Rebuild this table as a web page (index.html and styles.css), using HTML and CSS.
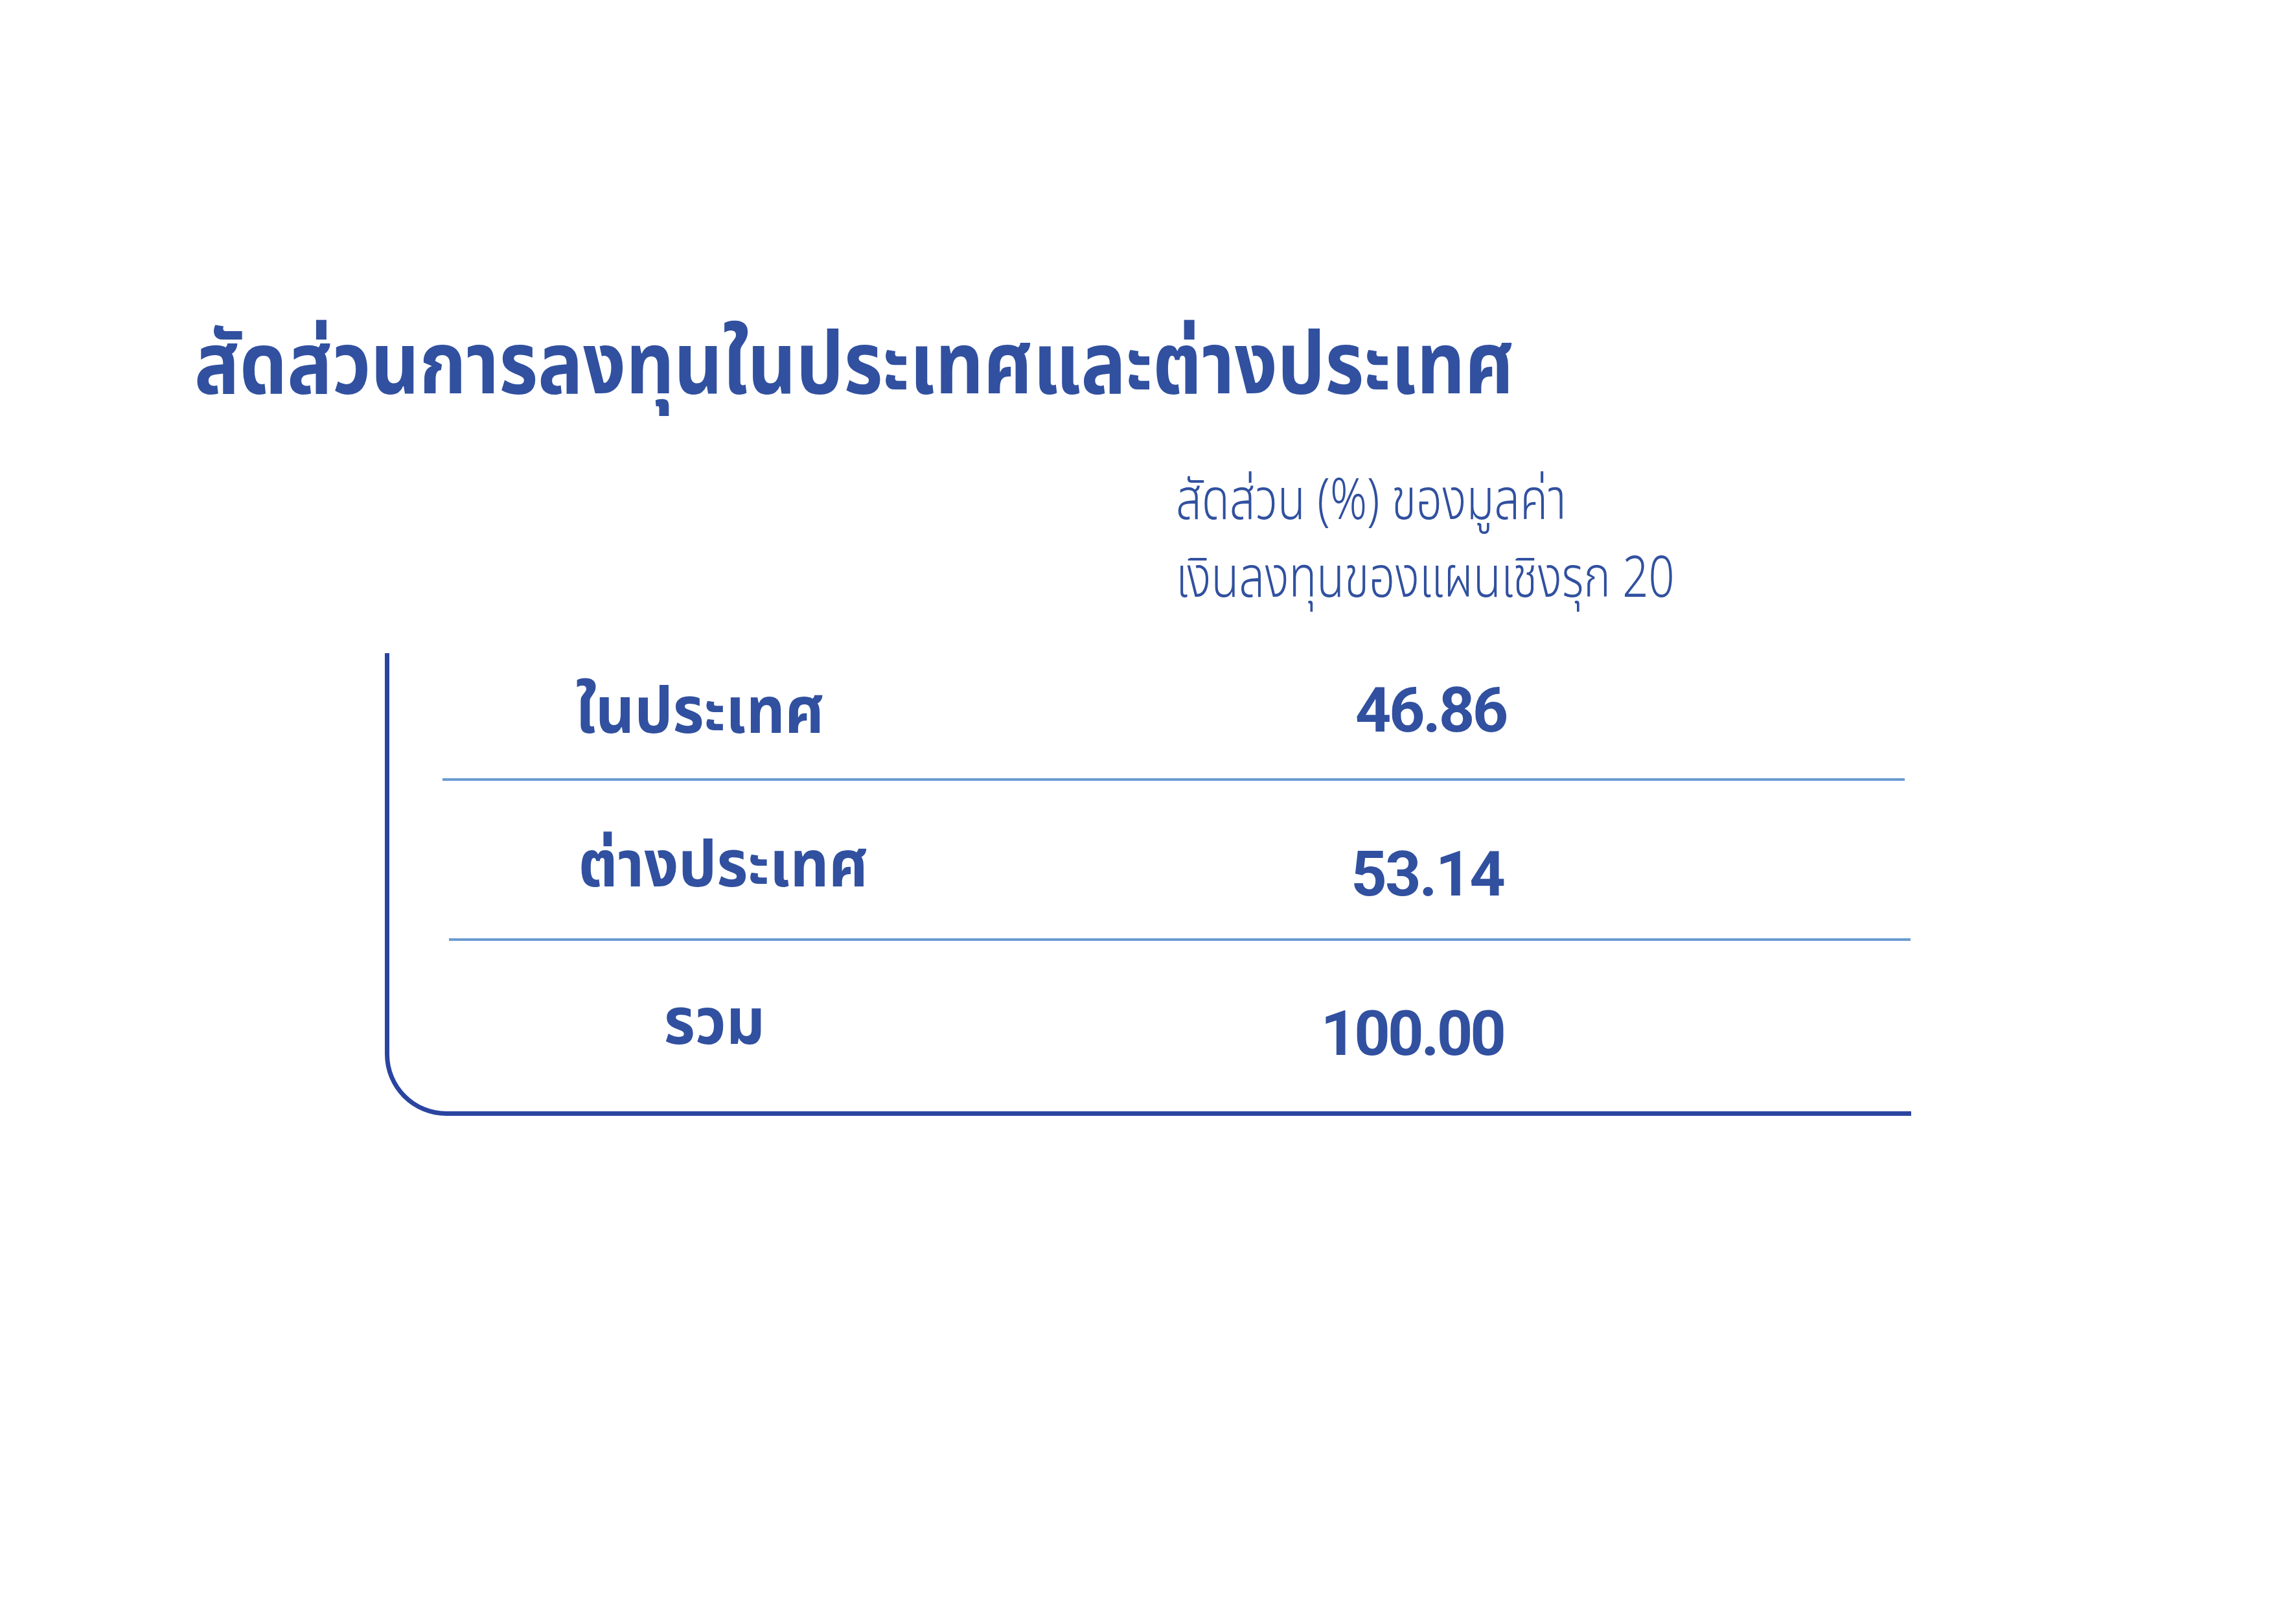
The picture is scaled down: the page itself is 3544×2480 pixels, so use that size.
FILE: index.html
```html
<!DOCTYPE html>
<html lang="th">
<head>
<meta charset="utf-8">
<title>สัดส่วนการลงทุนในประเทศและต่างประเทศ</title>
<link rel="stylesheet" href="styles.css">
</head>
<body>
<main class="page">
  <h1 class="title">สัดส่วนการลงทุนในประเทศและต่างประเทศ</h1>
  <div class="colhead">
    <div class="colhead-line">สัดส่วน (%) ของมูลค่า</div>
    <div class="colhead-line">เงินลงทุนของแผนเชิงรุก 20</div>
  </div>
  <section class="table">
    <div class="row row-1">
      <div class="label"><span class="label-text">ในประเทศ</span></div>
      <div class="value">46.86</div>
    </div>
    <div class="row row-2">
      <div class="label"><span class="label-text">ต่างประเทศ</span></div>
      <div class="value">53.14</div>
    </div>
    <div class="row row-3">
      <div class="label"><span class="label-text">รวม</span></div>
      <div class="value">100.00</div>
    </div>
  </section>
</main>
</body>
</html>
```

FILE: styles.css
```css
html, body {
  margin: 0;
  padding: 0;
  background: #ffffff;
}

body {
  width: 3544px;
  height: 2480px;
  overflow: hidden;
  font-family: "Noto Sans Thai", "Noto Sans Thai UI", "Noto Sans Thai Looped", "Sarabun", "Kanit", "Loma", "Garuda", "Noto Sans", sans-serif;
  color: #31509f;
}

.page {
  padding-top: 486px;
  padding-left: 300px;
}

.title {
  margin: 0;
  font-size: 134px;
  font-weight: 700;
  line-height: 160px;
  white-space: nowrap;
  transform: scaleX(0.865);
  transform-origin: left center;
}

.colhead {
  margin-left: 1515px;
  margin-top: 69px;
  font-size: 88px;
  font-weight: 300;
  transform: scaleX(0.8);
  transform-origin: left center;
}

.colhead-line {
  line-height: 120px;
  white-space: nowrap;
}

.table {
  margin-top: 53px;
  margin-left: 294px;
  width: 2356px;
  box-sizing: border-box;
  border-left: 7px solid #2a44a0;
  border-bottom: 7px solid #2a44a0;
  border-bottom-left-radius: 95px;
}

.row {
  display: flex;
  align-items: flex-start;
  box-sizing: border-box;
}

.row-1 {
  height: 197px;
  margin-left: 82px;
  margin-right: 10px;
  border-bottom: 4px solid #6a9bd1;
}

.row-2 {
  height: 247px;
  margin-left: 92px;
  margin-right: 1px;
  border-bottom: 4px solid #6a9bd1;
}

.row-3 {
  height: 263px;
  margin-left: 90px;
}

.label {
  width: 824px;
  box-sizing: border-box;
  text-align: center;
  font-size: 100px;
  font-weight: 700;
  line-height: 100px;
  white-space: nowrap;
}

.label-text {
  display: inline-block;
  transform: scaleX(0.93);
}

.value {
  width: 804px;
  text-align: right;
  font-family: "Roboto", "Liberation Sans", sans-serif;
  font-size: 97px;
  font-weight: 700;
  line-height: 97px;
  letter-spacing: -3px;
}

.row-1 .label { padding-top: 43px; padding-right: 28px; }
.row-2 .label { padding-top: 83px; padding-left: 24px; }
.row-3 .label { padding-top: 79px; }

.row-1 .value { padding-top: 40px; width: 818px; letter-spacing: -3.5px; }
.row-2 .value { padding-top: 96px; }
.row-3 .value { padding-top: 95px; width: 806px; letter-spacing: -4px; }
```
